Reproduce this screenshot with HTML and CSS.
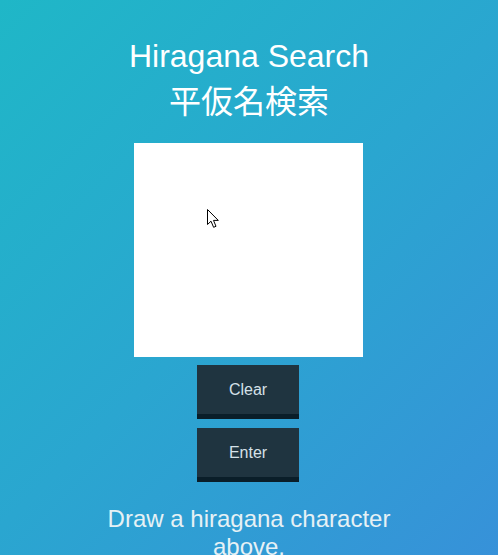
FILE: index.html
```html
<!DOCTYPE html>
<html lang="en">
<head>
<meta charset="utf-8">
<title>Hiragana Search</title>
<link rel="stylesheet" href="styles.css">
</head>
<body>
<main class="app">
  <h1 class="title">Hiragana Search<br>平仮名検索</h1>
  <div class="pad">
    <svg class="cursor" width="14" height="20" viewBox="0 0 14 20" aria-hidden="true">
      <path d="M0.5 0.5 L0.5 15.5 L4 12.2 L6.6 18.3 L9 17.3 L6.5 11.4 L11.3 11.4 Z" fill="#fff" stroke="#000" stroke-width="1" stroke-linejoin="miter"/>
    </svg>
  </div>
  <div class="actions">
    <button class="btn" type="button">Clear</button>
    <button class="btn" type="button">Enter</button>
  </div>
  <p class="hint">Draw a hiragana character above.</p>
</main>
</body>
</html>
```
FILE: styles.css
```css
html, body {
  margin: 0;
  padding: 0;
}
body {
  min-height: 100vh;
  background: linear-gradient(135deg, #1fb7c7 0%, #2aa6d0 50%, #3791d9 100%);
  font-family: "Liberation Sans", Arial, "Noto Sans CJK JP", sans-serif;
  overflow: hidden;
}
.app {
  display: flex;
  flex-direction: column;
  align-items: center;
  padding-top: 33px;
}
.title {
  margin: 0;
  font-size: 32px;
  font-weight: normal;
  line-height: 46px;
  color: #ffffff;
  text-align: center;
}
.pad {
  position: relative;
  margin: 18px 1px 0 0;
  width: 229px;
  height: 214px;
  background: #ffffff;
}
.cursor {
  position: absolute;
  left: 73px;
  top: 66px;
}
.actions {
  display: flex;
  flex-direction: column;
  gap: 9px;
  margin: 8px 2px 0 0;
}
.btn {
  width: 102px;
  height: 54px;
  padding: 0;
  border: none;
  border-bottom: 5px solid #0a1e29;
  background: #1f3440;
  color: #d5e1e8;
  font-family: "Liberation Sans", Arial, sans-serif;
  font-size: 16px;
  cursor: pointer;
}
.hint {
  width: 300px;
  margin: 23px 0 0;
  font-size: 24px;
  line-height: 27.5px;
  color: #e6f1f5;
  text-align: center;
}
```
